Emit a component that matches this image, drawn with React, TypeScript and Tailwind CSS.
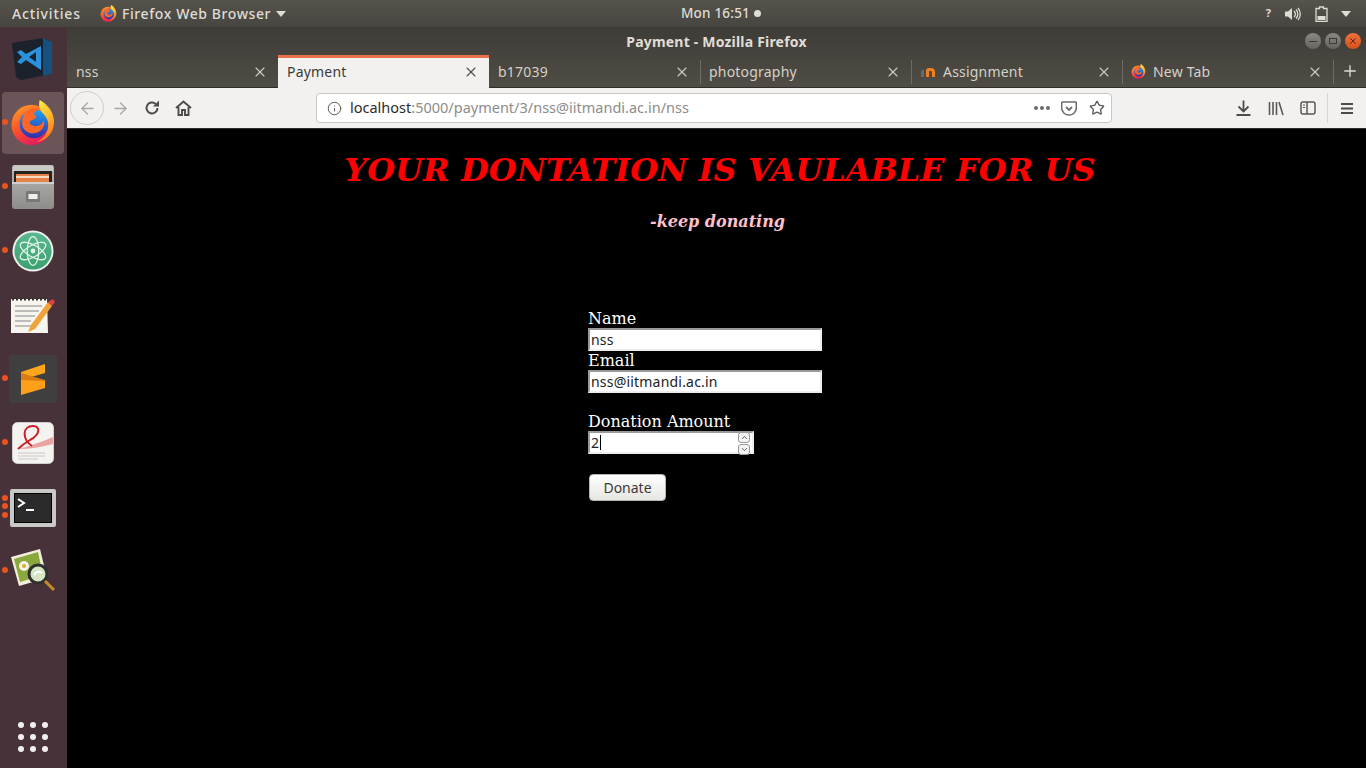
import React from "react";
import { ArrowLeft, ArrowRight, Info, Star, X, Plus, ChevronUp, ChevronDown } from "lucide-react";

const ui = { fontFamily: '"Noto Sans", "Open Sans", sans-serif' };

function Firefox({ size, id }: { size: number; id: string }) {
  return (
    <svg width={size} height={size} viewBox="0 0 48 48" className="shrink-0">
      <defs>
        <linearGradient id={`${id}a`} x1="0.2" y1="0" x2="0.7" y2="1">
          <stop offset="0" stopColor="#ff9a22" />
          <stop offset="0.5" stopColor="#ff4d2c" />
          <stop offset="1" stopColor="#df1568" />
        </linearGradient>
        <linearGradient id={`${id}b`} x1="0" y1="0" x2="0" y2="1">
          <stop offset="0" stopColor="#19a5ee" />
          <stop offset="1" stopColor="#3a2aa6" />
        </linearGradient>
        <linearGradient id={`${id}c`} x1="0" y1="0" x2="0.4" y2="1">
          <stop offset="0" stopColor="#fff44f" />
          <stop offset="0.6" stopColor="#ffb52a" />
          <stop offset="1" stopColor="#ff7a1e" />
        </linearGradient>
      </defs>
      <circle cx="22.5" cy="26" r="21" fill={`url(#${id}a)`} />
      <circle cx="25" cy="25" r="15" fill={`url(#${id}b)`} />
      <path d="M15 14c4-5 11-7 16-5-2 1-6 3-6 6 2 1 3 2 2 4l-6 3c-1 3 1 5 5 5 5 0 8-2 9-6 2 5-1 11-7 13-7 2-13-1-15-7-1-5 0-9 2-13z" fill="#ff6526" />
      <path d="M31 0c8 4 15 13 15 23 0 11-8 20-19 21 8-3 13-10 13-18 0-7-5-11-8-15-2-3-2-8-1-11z" fill={`url(#${id}c)`} />
    </svg>
  );
}

function Tab({ label, active, icon, first }: { label: string; active?: boolean; icon?: React.ReactNode; first?: boolean }) {
  return (
    <div
      className={`relative flex h-[33px] flex-1 items-center gap-[7px] pl-[9px] pr-[10px] ${
        active ? "border-t-[3px] border-[#e9714c] bg-[#f2f1ef] pb-[2px] text-[#3c3b37]" : "text-[#d5d1c8]"
      }`}
    >
      {!active && !first && <div className="absolute left-0 top-[5px] h-[24px] w-px bg-[#6f6c64]" />}
      {icon}
      <span className="flex-1 text-[14px] leading-none tracking-[0.2px]">{label}</span>
      <X size={16} strokeWidth={1.6} className={active ? "text-[#4d4c48]" : "text-[#cfccc4]"} />
    </div>
  );
}

function DockItem({ children, dots = [], active }: { children: React.ReactNode; dots?: number[]; active?: boolean }) {
  return (
    <div className="relative flex h-[64px] w-[62px] items-center justify-center">
      {active && <div className="absolute inset-x-0 inset-y-px rounded-[4px] bg-[#6c5558]" />}
      {dots.map((d) => (
        <div key={d} className="absolute left-0 z-10 h-[6px] w-[6px] rounded-full bg-[#e95420]" style={{ top: d }} />
      ))}
      <div className="relative flex items-center justify-center">{children}</div>
    </div>
  );
}

function Dock() {
  return (
    <aside className="relative flex w-[67px] shrink-0 flex-col bg-[#47323a] pl-[2px]">
      <div className="flex flex-col">
        <DockItem>
          <svg width="44" height="44" viewBox="0 0 44 44">
            <path d="M1 6 L32 1 L41 5 V37 L10 43 L5 40z" fill="#1b222b" />
            <path d="M32 1 L41 5 V37 L32 39z" fill="#15507f" />
            <path d="M30 9 V33 L15 23 L10 27 L6 25 L11 20 L6 15 L10 13 L15 17z M25 15 L18 20 L25 25z" fill="#2b93dd" />
          </svg>
        </DockItem>
        <DockItem active dots={[28]}>
          <Firefox size={46} id="dockff" />
        </DockItem>
        <DockItem dots={[28]}>
          <svg width="42" height="44" viewBox="0 0 42 44">
            <defs>
              <linearGradient id="cab" x1="0" y1="0" x2="0" y2="1">
                <stop offset="0" stopColor="#b8b8b5" />
                <stop offset="1" stopColor="#8d8d8a" />
              </linearGradient>
            </defs>
            <path d="M0 3a3 3 0 0 1 3-3h36a3 3 0 0 1 3 3v38a3 3 0 0 1-3 3H3a3 3 0 0 1-3-3z" fill="url(#cab)" />
            <rect x="1" y="0.500" width="40" height="6" fill="#c9c9c6" />
            <rect x="2" y="6" width="38" height="11" fill="#26221f" />
            <rect x="4" y="9" width="33" height="8" fill="#e4824a" />
            <rect x="4" y="11" width="33" height="2" fill="#f7dcc0" />
            <rect x="0" y="17" width="42" height="2" fill="#d0d0cd" />
            <rect x="14" y="26" width="14" height="11" rx="1" fill="#787875" />
            <rect x="16.500" y="29" width="9" height="5" fill="#efefed" />
          </svg>
        </DockItem>
        <DockItem dots={[28]}>
          <svg width="42" height="42" viewBox="0 0 44 44">
            <defs>
              <linearGradient id="atom" x1="0" y1="0" x2="0" y2="1">
                <stop offset="0" stopColor="#5cb68f" />
                <stop offset="1" stopColor="#3aa06f" />
              </linearGradient>
            </defs>
            <circle cx="22" cy="22" r="21.500" fill="#eef3ef" />
            <circle cx="22" cy="22" r="19.500" fill="url(#atom)" />
            <g fill="none" stroke="#dff4e8" strokeWidth="1.400">
              <ellipse cx="22" cy="22" rx="15" ry="6" transform="rotate(30 22 22)" />
              <ellipse cx="22" cy="22" rx="15" ry="6" transform="rotate(-30 22 22)" />
              <ellipse cx="22" cy="22" rx="15" ry="6" transform="rotate(90 22 22)" />
            </g>
            <circle cx="22" cy="22" r="2.500" fill="#dff4e8" />
          </svg>
        </DockItem>
        <DockItem>
          <svg width="46" height="38" viewBox="0 0 46 38">
            <path d="M1 3h36l1 34H1z" fill="#f7f5ee" />
            <path d="M2 3h35" stroke="#333" strokeWidth="3" strokeDasharray="2 2" />
            <path d="M5 10h27M5 15h24M5 20h20M5 25h16M5 30h22" stroke="#aaa" strokeWidth="1.300" />
            <path d="M21 29l-3 7 7-3L42 10l-4-4z" fill="#f0a33a" />
            <path d="M38 6l4 4 3-4-2-3z" fill="#e0413a" />
          </svg>
        </DockItem>
        <DockItem dots={[28]}>
          <div className="flex h-[48px] w-[48px] items-center justify-center rounded-[3px] bg-[#3f3f3f]">
            <svg width="24" height="32" viewBox="0 0 24 32">
              <path d="M24 1v9L0 17V9z" fill="#ffa51e" />
              <path d="M0 12l24 6v7L0 32v-8z" fill="#ff9f1a" />
              <path d="M0 10l24 7v1L0 17z" fill="#d97c12" />
            </svg>
          </div>
        </DockItem>
        <DockItem dots={[28]}>
          <svg width="42" height="42" viewBox="0 0 42 42">
            <rect x="0.500" y="0.500" width="41" height="41" rx="5" fill="#f4f3f0" stroke="#cfcfcb" />
            <path d="M5 27C18 25 41 15 41 15v7C30 25 18 27 5 27z" fill="#e9a3a3" />
            <path d="M20 24C10 17 10 4 21 4c8 0 7 9-3 14-5 3-9 6-12 9" fill="none" stroke="#cf1f26" strokeWidth="2" />
            <path d="M6 31h27M6 34h27M6 37h20" stroke="#c8c8c6" strokeWidth="1" />
          </svg>
        </DockItem>
        <DockItem dots={[20, 28, 37]}>
          <div className="mt-[2px] flex h-[38px] w-[46px] rounded-[2px] border-[4px] border-[#c8c8c4] bg-[#2b2b2b]">
            <div className="h-full w-full border border-black">
              <svg width="36" height="28" viewBox="0 0 36 28">
                <path d="M3 5l6 4-6 4" fill="none" stroke="#fff" strokeWidth="2" />
                <rect x="11" y="15" width="8" height="2" fill="#fff" />
              </svg>
            </div>
          </div>
        </DockItem>
        <DockItem dots={[28]}>
          <svg width="46" height="46" viewBox="0 0 46 46">
            <path d="M1 9L30 1l7 29-28 8z" fill="#f3efdc" />
            <path d="M4 11L28 4l5 23-23 7z" fill="#8aa83c" />
            <circle cx="14" cy="18" r="5" fill="#f6f3ea" />
            <circle cx="14" cy="18" r="2" fill="#e5a92c" />
            <circle cx="28" cy="26" r="9" fill="#d5e6c5" stroke="#2f2f2f" strokeWidth="3" />
            <path d="M24 27c2-4 6-4 8-2" stroke="#fff" strokeWidth="2" fill="none" />
            <path d="M35 33l9 9" stroke="#c68a2b" strokeWidth="3" />
          </svg>
        </DockItem>
      </div>
      <div className="mb-[16px] ml-[16px] mt-auto grid w-[30px] grid-cols-3 gap-[6px]">
        {Array.from({ length: 9 }).map((_, i) => (
          <div key={i} className="h-[6px] w-[6px] rounded-full bg-[#f2f0ee]" />
        ))}
      </div>
    </aside>
  );
}

function TopBar() {
  return (
    <header className="relative flex h-[27px] shrink-0 items-center bg-gradient-to-b from-[#56534c] to-[#47453f] text-[14px] font-medium text-[#dfdcd5]">
      <span className="ml-[12px] w-[88px] tracking-[0.85px]">Activities</span>
      <Firefox size={17} id="topff" />
      <span className="ml-[5px] tracking-[0.6px]">Firefox Web Browser</span>
      <div className="ml-[5px] h-0 w-0 border-x-[5px] border-t-[6px] border-x-transparent border-t-[#dfdcd5]" />
      <div className="absolute left-[681px] top-0 flex h-[27px] items-center gap-[4px]">
        <span className="text-[13.5px] tracking-[0.2px]">Mon 16:51</span>
        <div className="h-[7px] w-[7px] rounded-full bg-[#dfdcd5]" />
      </div>
      <div className="ml-auto mr-[15px] flex items-center">
        <span className="mr-[14px] text-[11px] font-bold">?</span>
        <svg width="16" height="14" viewBox="0 0 16 14" className="mr-[14px]">
          <path d="M0 4.500h3L7 1v12L3 9.500H0z" fill="#dfdcd5" />
          <path d="M9 4a4 4 0 0 1 0 6M11 2.500a6.500 6.500 0 0 1 0 9M13 1a9 9 0 0 1 0 12" stroke="#dfdcd5" strokeWidth="1.300" fill="none" />
        </svg>
        <svg width="13" height="16" viewBox="0 0 13 16" className="mr-[13px]">
          <path d="M4.500 1h4v1.500h3.500v13H1v-13h3.500z" fill="none" stroke="#dfdcd5" strokeWidth="1.300" />
          <rect x="2.500" y="10" width="8" height="4" fill="#dfdcd5" />
        </svg>
        <div className="h-0 w-0 border-x-[5px] border-t-[6px] border-x-transparent border-t-[#dfdcd5]" />
      </div>
    </header>
  );
}

function WinBtn({ bg, children }: { bg: string; children: React.ReactNode }) {
  return <div className={`flex h-[16px] w-[16px] items-center justify-center rounded-full ${bg}`}>{children}</div>;
}

function Browser() {
  return (
    <div className="flex min-w-0 flex-1 flex-col">
      <div className="bg-gradient-to-b from-[#3e3c37] to-[#504d46]">
        <div className="relative flex h-[28px] items-center justify-center">
          <span className="text-[14px] font-bold tracking-[0.2px] text-[#e0ddd6]">Payment - Mozilla Firefox</span>
          <div className="absolute right-[5px] top-[6px] flex gap-[4px]">
            <WinBtn bg="bg-gradient-to-b from-[#8a8882] to-[#66645e]">
              <div className="h-px w-[8px] bg-[#3c3b37]" />
            </WinBtn>
            <WinBtn bg="bg-gradient-to-b from-[#8a8882] to-[#66645e]">
              <div className="h-[6px] w-[8px] border border-[#3c3b37]" />
            </WinBtn>
            <WinBtn bg="bg-gradient-to-b from-[#f0703a] to-[#d94f1c]">
              <X size={10} strokeWidth={2} className="text-[#3c2015]" />
            </WinBtn>
          </div>
        </div>
        <div className="flex h-[33px] border-b border-[#2f2e2b]">
          <div className="flex flex-1">
            <Tab first label="nss" />
            <Tab active label="Payment" />
            <Tab first label="b17039" />
            <Tab label="photography" />
            <Tab
              label="Assignment"
              icon={
                <svg width="16" height="12" viewBox="0 0 16 12" className="shrink-0">
                  <path d="M1 11V6a2 2 0 0 1 2-2h1v7z" fill="#6d6a62" />
                  <path d="M6 11V5a3 3 0 0 1 3-3h2a4 4 0 0 1 4 4v5h-3V6a1 1 0 0 0-1-1H9v6z" fill="#f07f23" />
                </svg>
              }
            />
            <Tab label="New Tab" icon={<Firefox size={15} id="tabff" />} />
          </div>
          <div className="relative flex w-[33px] items-center justify-center">
            <div className="absolute left-0 top-[5px] h-[24px] w-px bg-[#6f6c64]" />
            <Plus size={18} strokeWidth={1.8} className="text-[#dedbd4]" />
          </div>
        </div>
      </div>
      <div className="flex h-[41px] items-center border-b border-[#2f2e2b] bg-[#f2f1ef] pl-[3px] text-[#5b5a56]">
        <div className="flex h-[34px] w-[34px] items-center justify-center rounded-full border border-[#cfcecb]">
          <ArrowLeft size={19} strokeWidth={1.6} className="text-[#a9a8a5]" />
        </div>
        <ArrowRight size={19} strokeWidth={1.6} className="ml-[7px] text-[#a9a8a5]" />
        <svg width="16" height="16" viewBox="0 0 16 16" className="ml-[14px]">
          <path d="M13.500 8a5.500 5.500 0 1 1-1.800-4.100" fill="none" stroke="#4d4c49" strokeWidth="2" />
          <path d="M15 0.500V6.500H9z" fill="#4d4c49" />
        </svg>
        <svg width="17" height="16" viewBox="0 0 17 16" className="ml-[15px]">
          <path d="M1 8l7.500-6.500L16 8M3.500 7v8h3.500v-5h3v5h3.500V7" fill="none" stroke="#4d4c49" strokeWidth="1.900" />
        </svg>
        <div className="ml-[124px] flex h-[30px] w-[796px] items-center rounded-[4px] border border-[#c9c8c5] bg-white pl-[10px] pr-[6px]">
          <Info size={15} strokeWidth={1.6} className="text-[#5b5a56]" />
          <span className="ml-[8px] flex-1 text-[14.5px] text-[#8d8c89]">
            <span className="text-[#2c2b28]">localhost</span>:5000/payment/3/nss@iitmandi.ac.in/nss
          </span>
          <div className="mr-[11px] flex gap-[2px]">
            <div className="h-[4px] w-[4px] rounded-full bg-[#6d6c68]" />
            <div className="h-[4px] w-[4px] rounded-full bg-[#6d6c68]" />
            <div className="h-[4px] w-[4px] rounded-full bg-[#6d6c68]" />
          </div>
          <svg width="16" height="15" viewBox="0 0 16 15" className="mr-[12px]">
            <path d="M1.500 1h13a.8.8 0 0 1 .8.8V7a7.300 7 0 0 1-14.600 0V1.800a.8.8 0 0 1 .8-.8z" fill="none" stroke="#6d6c68" strokeWidth="1.500" />
            <path d="M5 6l3 3 3-3" fill="none" stroke="#6d6c68" strokeWidth="1.800" />
          </svg>
          <Star size={16} strokeWidth={2} className="text-[#5b5a56]" />
        </div>
        <svg width="15" height="16" viewBox="0 0 15 16" className="ml-[124px]">
          <path d="M7.500 0.500V11M2.500 6.500l5 5 5-5M0.500 15h14" fill="none" stroke="#4d4c49" strokeWidth="1.800" />
        </svg>
        <svg width="16" height="15" viewBox="0 0 16 15" className="ml-[17px]">
          <path d="M1.500 1v13M5 1v13M8.500 1v13M11 1l4 13" stroke="#5b5a56" strokeWidth="1.600" fill="none" />
        </svg>
        <svg width="16" height="14" viewBox="0 0 16 14" className="ml-[16px]">
          <rect x="1" y="1" width="14" height="12" rx="2" fill="none" stroke="#5b5a56" strokeWidth="1.500" />
          <path d="M7 1v12" stroke="#5b5a56" strokeWidth="1.500" />
          <path d="M3 4h2M3 6.500h2" stroke="#5b5a56" strokeWidth="1" />
        </svg>
        <div className="ml-[11px] h-[30px] w-px bg-[#d6d5d2]" />
        <svg width="12" height="11" viewBox="0 0 12 11" className="ml-[13px]">
          <path d="M0 1h12M0 5.500h12M0 10h12" stroke="#4d4c49" strokeWidth="1.800" />
        </svg>
      </div>
      <main className="flex flex-1 flex-col bg-black" style={{ fontFamily: '"DejaVu Serif", serif' }}>
        <h1 className="mt-[20px] pl-[7px] text-center text-[32px] font-bold italic leading-[42px] tracking-[0.06px] text-[#ff0000]">
          YOUR DONTATION IS VAULABLE FOR US
        </h1>
        <h4 className="mt-[21px] pl-[2px] text-center text-[16px] font-bold italic leading-[19px] text-[#ffc0cb]">-keep donating</h4>
        <form className="ml-[521px] mt-[78px] flex w-[234px] flex-col text-[16px] leading-[19px] text-white">
          <label>Name</label>
          <div className="flex h-[23px] items-center border-2 border-[#9a9a9a] border-b-[#eeeeee] border-r-[#eeeeee] bg-white pl-px text-[14px] tracking-[0.2px] text-[#222]" style={ui}>
            nss
          </div>
          <label>Email</label>
          <div className="flex h-[23px] items-center border-2 border-[#9a9a9a] border-b-[#eeeeee] border-r-[#eeeeee] bg-white pl-px text-[14px] tracking-[0.2px] text-[#222]" style={ui}>
            nss@iitmandi.ac.in
          </div>
          <label className="mt-[19px]">Donation Amount</label>
          <div className="relative flex h-[23px] w-[166px] items-center border-2 border-[#9a9a9a] border-b-[#eeeeee] border-r-[#eeeeee] bg-white pl-px text-[14px] text-[#222]" style={ui}>
            2<div className="ml-px h-[15px] w-px bg-black" />
            <div className="absolute right-[2px] top-[-1px] flex flex-col gap-[1px]">
              <div className="flex h-[11px] w-[12px] items-center justify-center rounded-[3px] border border-[#999] bg-[#f4f4f4]">
                <ChevronUp size={9} strokeWidth={2} className="text-[#333]" />
              </div>
              <div className="flex h-[11px] w-[12px] items-center justify-center rounded-[3px] border border-[#999] bg-[#f4f4f4]">
                <ChevronDown size={9} strokeWidth={2} className="text-[#333]" />
              </div>
            </div>
          </div>
          <button
            type="button"
            className="ml-px mt-[20px] h-[27px] w-[77px] rounded-[4px] border border-[#b5b5b2] bg-gradient-to-b from-white to-[#e6e6e3] text-[14px] text-[#3c3b37]"
            style={ui}
          >
            Donate
          </button>
        </form>
      </main>
    </div>
  );
}

export default function App() {
  return (
    <div className="flex h-[768px] w-[1366px] flex-col overflow-hidden" style={ui}>
      <TopBar />
      <div className="flex min-h-0 flex-1">
        <Dock />
        <Browser />
      </div>
    </div>
  );
}
